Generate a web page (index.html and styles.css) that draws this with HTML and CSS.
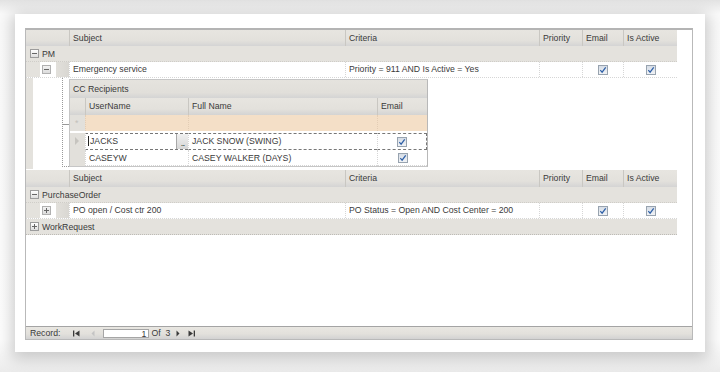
FILE: index.html
```html
<!doctype html>
<html lang="en">
    <head>
        <meta charset="UTF-8" />
        <title>Notification rules</title>
        <link rel="stylesheet" href="styles.css">
    </head>
    <body>
        <div class="card">
            <div class="grid">
                <div class="rows">
                    <div class="cols head">
                        <div class="c"></div>
                        <div class="c">Subject</div>
                        <div class="c">Criteria</div>
                        <div class="c">Priority</div>
                        <div class="c">Email</div>
                        <div class="c">Is Active</div>
                    </div>

                    <!-- PM group -->
                    <div class="group"><span class="tog"></span>PM</div>
                    <div class="cols data">
                        <div class="c lead"><span class="lvl"></span><span class="cell-tog"><span class="tog light"></span></span><span class="sel"></span></div>
                        <div class="c">Emergency service</div>
                        <div class="c">Priority = 911 AND Is Active = Yes</div>
                        <div class="c"></div>
                        <div class="c mid"><span class="chk"><svg width="8" height="8" viewBox="0 0 8 8"><path d="M1.3 4.2 L3.1 6.2 L6.7 1.4" /></svg></span></div>
                        <div class="c mid"><span class="chk"><svg width="8" height="8" viewBox="0 0 8 8"><path d="M1.3 4.2 L3.1 6.2 L6.7 1.4" /></svg></span></div>
                    </div>

                    <!-- CC Recipients detail -->
                    <div class="detail">
                        <div class="tree">
                            <span class="lvl"></span>
                            <span class="branch"></span>
                        </div>
                        <div class="sub">
                            <div class="sub-title">CC Recipients</div>
                            <div class="scols sub-head">
                                <div class="c"></div>
                                <div class="c">UserName</div>
                                <div class="c">Full Name</div>
                                <div class="c">Email</div>
                            </div>
                            <div class="scols new-row">
                                <div class="c ind">*</div>
                                <div class="c"></div>
                                <div class="c"></div>
                                <div class="c"></div>
                            </div>
                            <div class="scols srow current">
                                <div class="c ind"><span class="arrow"></span></div>
                                <div class="c editor"><span class="caret"></span>JACKS<span class="dots">...</span></div>
                                <div class="c">JACK SNOW (SWING)</div>
                                <div class="c mid"><span class="chk"><svg width="8" height="8" viewBox="0 0 8 8"><path d="M1.3 4.2 L3.1 6.2 L6.7 1.4" /></svg></span></div>
                            </div>
                            <div class="scols srow">
                                <div class="c ind"></div>
                                <div class="c">CASEYW</div>
                                <div class="c">CASEY WALKER (DAYS)</div>
                                <div class="c mid"><span class="chk"><svg width="8" height="8" viewBox="0 0 8 8"><path d="M1.3 4.2 L3.1 6.2 L6.7 1.4" /></svg></span></div>
                            </div>
                        </div>
                    </div>

                    <div class="cols head second">
                        <div class="c"></div>
                        <div class="c">Subject</div>
                        <div class="c">Criteria</div>
                        <div class="c">Priority</div>
                        <div class="c">Email</div>
                        <div class="c">Is Active</div>
                    </div>

                    <!-- PurchaseOrder group -->
                    <div class="group"><span class="tog"></span>PurchaseOrder</div>
                    <div class="cols data">
                        <div class="c lead"><span class="lvl"></span><span class="cell-tog"><span class="tog light plus"></span></span><span class="sel"></span></div>
                        <div class="c">PO open / Cost ctr 200</div>
                        <div class="c">PO Status = Open AND Cost Center = 200</div>
                        <div class="c"></div>
                        <div class="c mid"><span class="chk"><svg width="8" height="8" viewBox="0 0 8 8"><path d="M1.3 4.2 L3.1 6.2 L6.7 1.4" /></svg></span></div>
                        <div class="c mid"><span class="chk"><svg width="8" height="8" viewBox="0 0 8 8"><path d="M1.3 4.2 L3.1 6.2 L6.7 1.4" /></svg></span></div>
                    </div>

                    <!-- WorkRequest group -->
                    <div class="group last"><span class="tog plus"></span>WorkRequest</div>
                </div>

                <div class="nav">
                    <span class="nav-label">Record:</span>
                    <svg class="nav-first" width="7" height="7" viewBox="0 0 7 7"><rect x="0" y="0.5" width="1.3" height="6" /><path d="M6.5 0.5 L2 3.5 L6.5 6.5 Z" /></svg>
                    <svg class="nav-prev" width="4" height="7" viewBox="0 0 4 7"><path d="M3.5 0.5 L0.5 3.5 L3.5 6.5 Z" /></svg>
                    <span class="nav-box">1</span>
                    <span class="nav-of">Of</span>
                    <span class="nav-count">3</span>
                    <svg class="nav-next" width="4" height="7" viewBox="0 0 4 7"><path d="M0.5 0.5 L3.5 3.5 L0.5 6.5 Z" /></svg>
                    <svg class="nav-last" width="7" height="7" viewBox="0 0 7 7"><path d="M0.5 0.5 L5 3.5 L0.5 6.5 Z" /><rect x="5.7" y="0.5" width="1.3" height="6" /></svg>
                </div>
            </div>
        </div>
    </body>
</html>
```

FILE: styles.css
```css
body {
    margin: 0;
    height: 372px;
    padding: 14px 0 0 15px;
    box-sizing: border-box;
    background: linear-gradient(#e2e2e2 0, #fafafa 14px, #fdfdfd 340px, #ebebeb 372px);
    font-family: "Liberation Sans", Arial, sans-serif;
    font-size: 8.7px;
    color: #3a3a3a;
}
.card {
    width: 690px;
    height: 338px;
    padding: 14px 12px 12px 10px;
    box-sizing: border-box;
    background-color: #fff;
    box-shadow: 0 3px 15px 3px rgba(0, 0, 0, 0.2);
}
.grid {
    height: 100%;
    display: flex;
    flex-direction: column;
    border: 1px solid #b9b9b9;
    border-top: 2px solid #b4b4b4;
    box-sizing: border-box;
}
.rows {
    flex: 1;
    width: 651px;
}
/* main grid rows */
.cols {
    display: grid;
    grid-template-columns: 43px 276px 194px 43px 41px 54px;
}
.c {
    overflow: hidden;
    white-space: nowrap;
    padding-left: 3px;
}
.head {
    height: 16px;
    line-height: 16px;
    background: linear-gradient(#e7e5e0 0, #e3e1dc 65%, #d4d4d4 100%);
}
.head .c + .c {
    border-left: 1px solid #c9c7c2;
}
.head.second {
    height: 17px;
    line-height: 17px;
    margin-top: 1px;
}
.group {
    display: flex;
    align-items: center;
    height: 16px;
    padding-left: 4px;
    background-color: #e4e2dd;
    border-bottom: 1px dotted #cfcdc8;
    box-sizing: border-box;
}
.group .tog {
    margin-right: 3px;
}
.group.last {
    border-bottom-color: #bdbbb6;
}
.data {
    height: 16px;
    line-height: 15px;
    border-bottom: 1px dotted #d6d6d6;
    box-sizing: border-box;
}
.data .c + .c {
    border-left: 1px dotted #d6d6d6;
}
.data .lead {
    display: flex;
    padding: 0;
}
.lvl {
    width: 15px;
    background-color: #e4e2dd;
}
.cell-tog {
    width: 14px;
    display: flex;
    align-items: center;
    padding-left: 2px;
}
.sel {
    width: 14px;
    background: linear-gradient(90deg, #e2e0db, #d9d7d2);
}
.mid {
    display: flex;
    align-items: center;
    justify-content: center;
    padding: 0;
}
/* expand / collapse box */
.tog {
    position: relative;
    width: 9px;
    height: 9px;
    border: 1px solid #9c9c9c;
    background: linear-gradient(#ffffff, #dedede);
    box-sizing: border-box;
}
.tog.light {
    border-color: #b0b0b0;
    background: linear-gradient(#f2f2f2, #dcdcdc);
}
.tog::before {
    content: "";
    position: absolute;
    left: 1px;
    top: 3px;
    width: 5px;
    height: 1px;
    background-color: #666;
}
.tog.plus::after {
    content: "";
    position: absolute;
    left: 3px;
    top: 1px;
    width: 1px;
    height: 5px;
    background-color: #666;
}
/* check box */
.chk {
    display: flex;
    align-items: center;
    justify-content: center;
    width: 10px;
    height: 10px;
    border: 1px solid #98a3af;
    background: linear-gradient(#d6dde6, #f1f3f6);
    box-sizing: border-box;
}
.chk path {
    fill: none;
    stroke: #2c5ea6;
    stroke-width: 1.2;
}
/* detail: CC Recipients */
.detail {
    display: flex;
    height: 91px;
}
.tree {
    display: flex;
    width: 43px;
}
.tree .lvl {
    width: 7px;
}
.branch {
    width: 7px;
    height: 88px;
    margin: 0 0 0 29px;
    border-left: 1px dotted #999;
    border-bottom: 1px dotted #999;
    background: linear-gradient(#999, #999) no-repeat 0 46px / 7px 1px;
}
.sub {
    width: 359px;
    height: 88px;
    margin-top: 1px;
    border: 1px solid #c6c6c6;
    border-right-color: #b8b8b8;
    box-sizing: border-box;
}
.sub-title {
    height: 18px;
    line-height: 18px;
    padding-left: 3px;
    background: linear-gradient(#e5e3de 0, #e1dfda 70%, #d4d4d4 100%);
}
.scols {
    display: grid;
    grid-template-columns: 15px 103px 189px 50px;
}
.sub-head {
    height: 17px;
    line-height: 17px;
    background: linear-gradient(#e7e5e0 0, #e3e1dc 65%, #d3d3d3 100%);
}
.sub-head .c + .c {
    border-left: 1px solid #c9c7c2;
}
.new-row {
    height: 16px;
    background-color: #f4dfc7;
    margin-bottom: 2px;
}
.new-row .c + .c {
    border-left: 1px dotted #e3cdb5;
}
.ind {
    background-color: #e2e0db;
    color: #c2c0bb;
    line-height: 16px;
    padding-left: 5px;
}
.srow {
    height: 16px;
    line-height: 16px;
}
.srow .c + .c {
    border-left: 1px dotted #d6d6d6;
}
.srow + .srow .c + .c {
    border-bottom: 1px dotted #d6d6d6;
}
.current {
    height: 17px;
    line-height: 15px;
}
.current .c + .c {
    border-top: 1px dashed #777;
    border-bottom: 1px dashed #777;
}
.current .c:last-child {
    border-right: 1px dashed #777;
}
.current .editor {
    display: flex;
    border-left: 1px dashed #777;
    padding-left: 2px;
}
.arrow {
    display: inline-block;
    margin-top: 4px;
    border-left: 4px solid #c6c4bf;
    border-top: 4px solid transparent;
    border-bottom: 4px solid transparent;
}
.caret {
    width: 1px;
    height: 10px;
    margin: 2px 1px 0 0;
    background-color: #222;
}
.dots {
    width: 11px;
    margin-left: auto;
    background: linear-gradient(#f0f0f0, #d6d6d6);
    border-left: 1px solid #a8a8a8;
    color: #222;
    font-size: 8px;
    line-height: 19px;
    text-align: center;
    letter-spacing: -1px;
}
/* record navigator */
.nav {
    display: flex;
    align-items: center;
    height: 12px;
    padding-left: 4px;
    border-top: 1px solid #a4a4a4;
    background: linear-gradient(#e8e6e1 0, #e3e1dc 55%, #d2d2d2 100%);
}
.nav svg {
    fill: #3a3a3a;
}
.nav-first {
    margin-left: 13px;
}
.nav .nav-prev {
    margin-left: 11px;
    fill: #c4c4c4;
}
.nav-box {
    width: 46px;
    height: 9px;
    margin-left: 8px;
    border: 1px solid #a6a6a6;
    background-color: #fff;
    text-align: right;
    line-height: 9px;
    padding-right: 2px;
    box-sizing: border-box;
}
.nav-of {
    margin-left: 2px;
}
.nav-count {
    margin-left: 5px;
}
.nav-next {
    margin-left: 6px;
}
.nav-last {
    margin-left: 8px;
}
```
